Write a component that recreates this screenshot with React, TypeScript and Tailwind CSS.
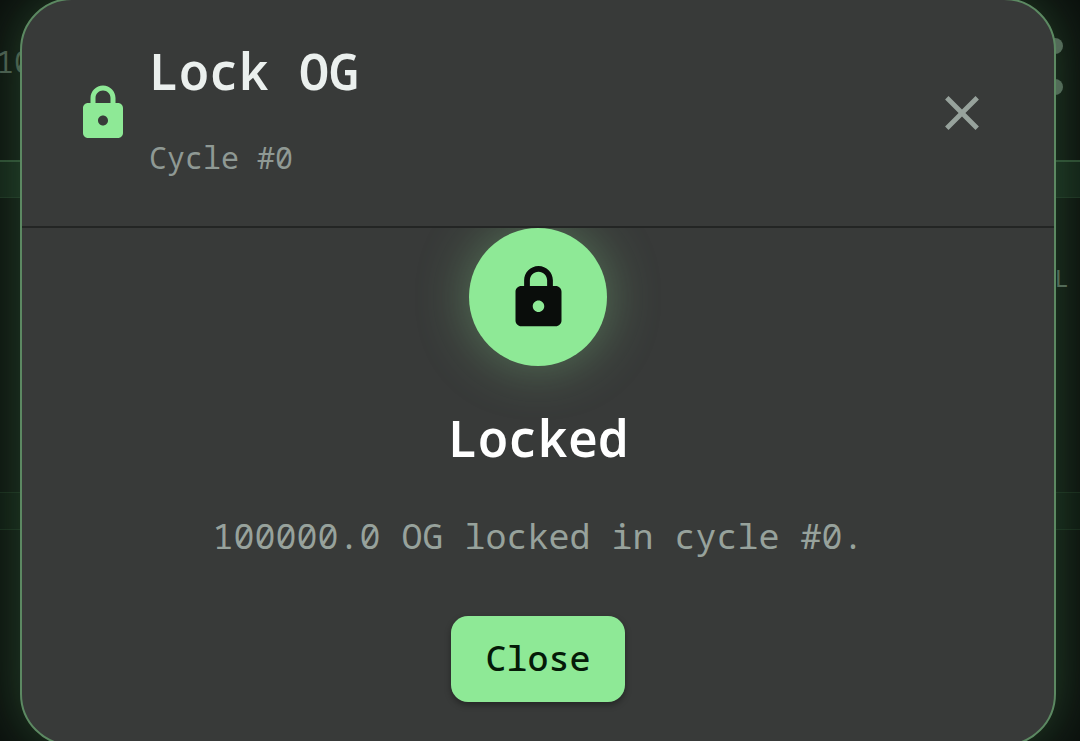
import { useState } from 'react';

function LockIcon({ className }: { className?: string }) {
  return (
    <svg viewBox="0 0 24 24" fill="currentColor" className={className} aria-hidden="true">
      <path d="M18 8h-1V6c0-2.76-2.24-5-5-5S7 3.24 7 6v2H6c-1.1 0-2 .9-2 2v10c0 1.1.9 2 2 2h12c1.1 0 2-.9 2-2V10c0-1.1-.9-2-2-2zm-6 9c-1.1 0-2-.9-2-2s.9-2 2-2 2 .9 2 2-.9 2-2 2zM9 8V6c0-1.66 1.34-3 3-3s3 1.34 3 3v2H9z" />
    </svg>
  );
}

function CloseIcon({ className }: { className?: string }) {
  return (
    <svg viewBox="0 0 24 24" fill="currentColor" className={className} aria-hidden="true">
      <path d="M19 6.41L17.59 5 12 10.59 6.41 5 5 6.41 10.59 12 5 17.59 6.41 19 12 13.41 17.59 19 19 17.59 13.41 12 19 6.41z" />
    </svg>
  );
}

// Dimmed page that stays visible around the dialog
function Backdrop() {
  return (
    <div className="flex h-screen flex-col bg-[#0b100d] text-[#4a5a4f]" aria-hidden="true">
      <div className="flex h-40 items-start justify-between pr-[17px] pt-[38px]">
        <span className="-ml-1 text-[30px] leading-[48px]">10</span>
        <div className="flex flex-col gap-[25px]">
          <span className="size-4 rounded-full bg-[#56665b]" />
          <span className="size-4 rounded-full bg-[#56665b]" />
        </div>
      </div>
      <div className="h-[38px] border-b border-t-2 border-b-[#1b2e20] border-t-[#2c4a32] bg-[#112016]" />
      <div className="flex h-[294px] flex-col items-end pr-[11px] pt-[66px]">
        <span className="text-[24px] leading-[28px] text-[#56665b]">L</span>
      </div>
      <div className="h-[38px] border-y border-[#16261a] bg-[#0c150f]" />
    </div>
  );
}

export default function App() {
  const [open, setOpen] = useState(true);

  return (
    <div className="relative h-screen overflow-hidden font-['Noto_Sans_Mono','DejaVu_Sans_Mono',monospace]">
      <Backdrop />

      {open && (
        <div className="absolute inset-0 -top-0.5 flex items-start pl-5 pr-6">
          <div
            role="dialog"
            aria-modal="true"
            aria-labelledby="lock-title"
            className="flex-1 rounded-[52px] border-2 border-[#5c8962] bg-[#383a39] shadow-[0_0_52px_rgba(70,130,80,0.45)]"
          >
            <header className="flex items-center gap-4 border-b-2 border-[#232524] px-[51px] pb-[46px] pt-[45px]">
              <LockIcon className="size-[60px] shrink-0 text-[#8ee996]" />
              <div className="flex flex-1 flex-col gap-[39px]">
                <h2 id="lock-title" className="text-[50px] font-semibold leading-[52px] text-[#ebf0ee]">
                  Lock OG
                </h2>
                <p className="text-[30px] leading-[44px] text-[#8f9994]">Cycle #0</p>
              </div>
              <button
                type="button"
                aria-label="Close dialog"
                onClick={() => setOpen(false)}
                className="cursor-pointer p-3 text-[#97a29c]"
              >
                <CloseIcon className="size-[58px]" />
              </button>
            </header>

            <div className="flex flex-col items-center overflow-hidden pb-[42px] text-center">
              <div className="flex size-[138px] items-center justify-center rounded-full bg-[#8ee996] text-[#0a0d0b] shadow-[0_0_52px_rgba(142,233,150,0.35)]">
                <LockIcon className="size-[69px]" />
              </div>
              <h3 className="mt-[46px] text-[50px] font-semibold leading-[52px] text-white">Locked</h3>
              <p className="mt-[46px] text-[35px] leading-[52px] text-[#97a29c]">
                100000.0 OG locked in cycle #0.
              </p>
              <button
                type="button"
                onClick={() => setOpen(false)}
                className="mt-[54px] cursor-pointer rounded-[17px] bg-[#8ee996] px-[34px] pb-[18px] pt-4 text-[35px] font-medium leading-[52px] text-[#051a08] shadow-[0_3px_6px_rgba(0,0,0,0.35)]"
              >
                Close
              </button>
            </div>
          </div>
        </div>
      )}
    </div>
  );
}
